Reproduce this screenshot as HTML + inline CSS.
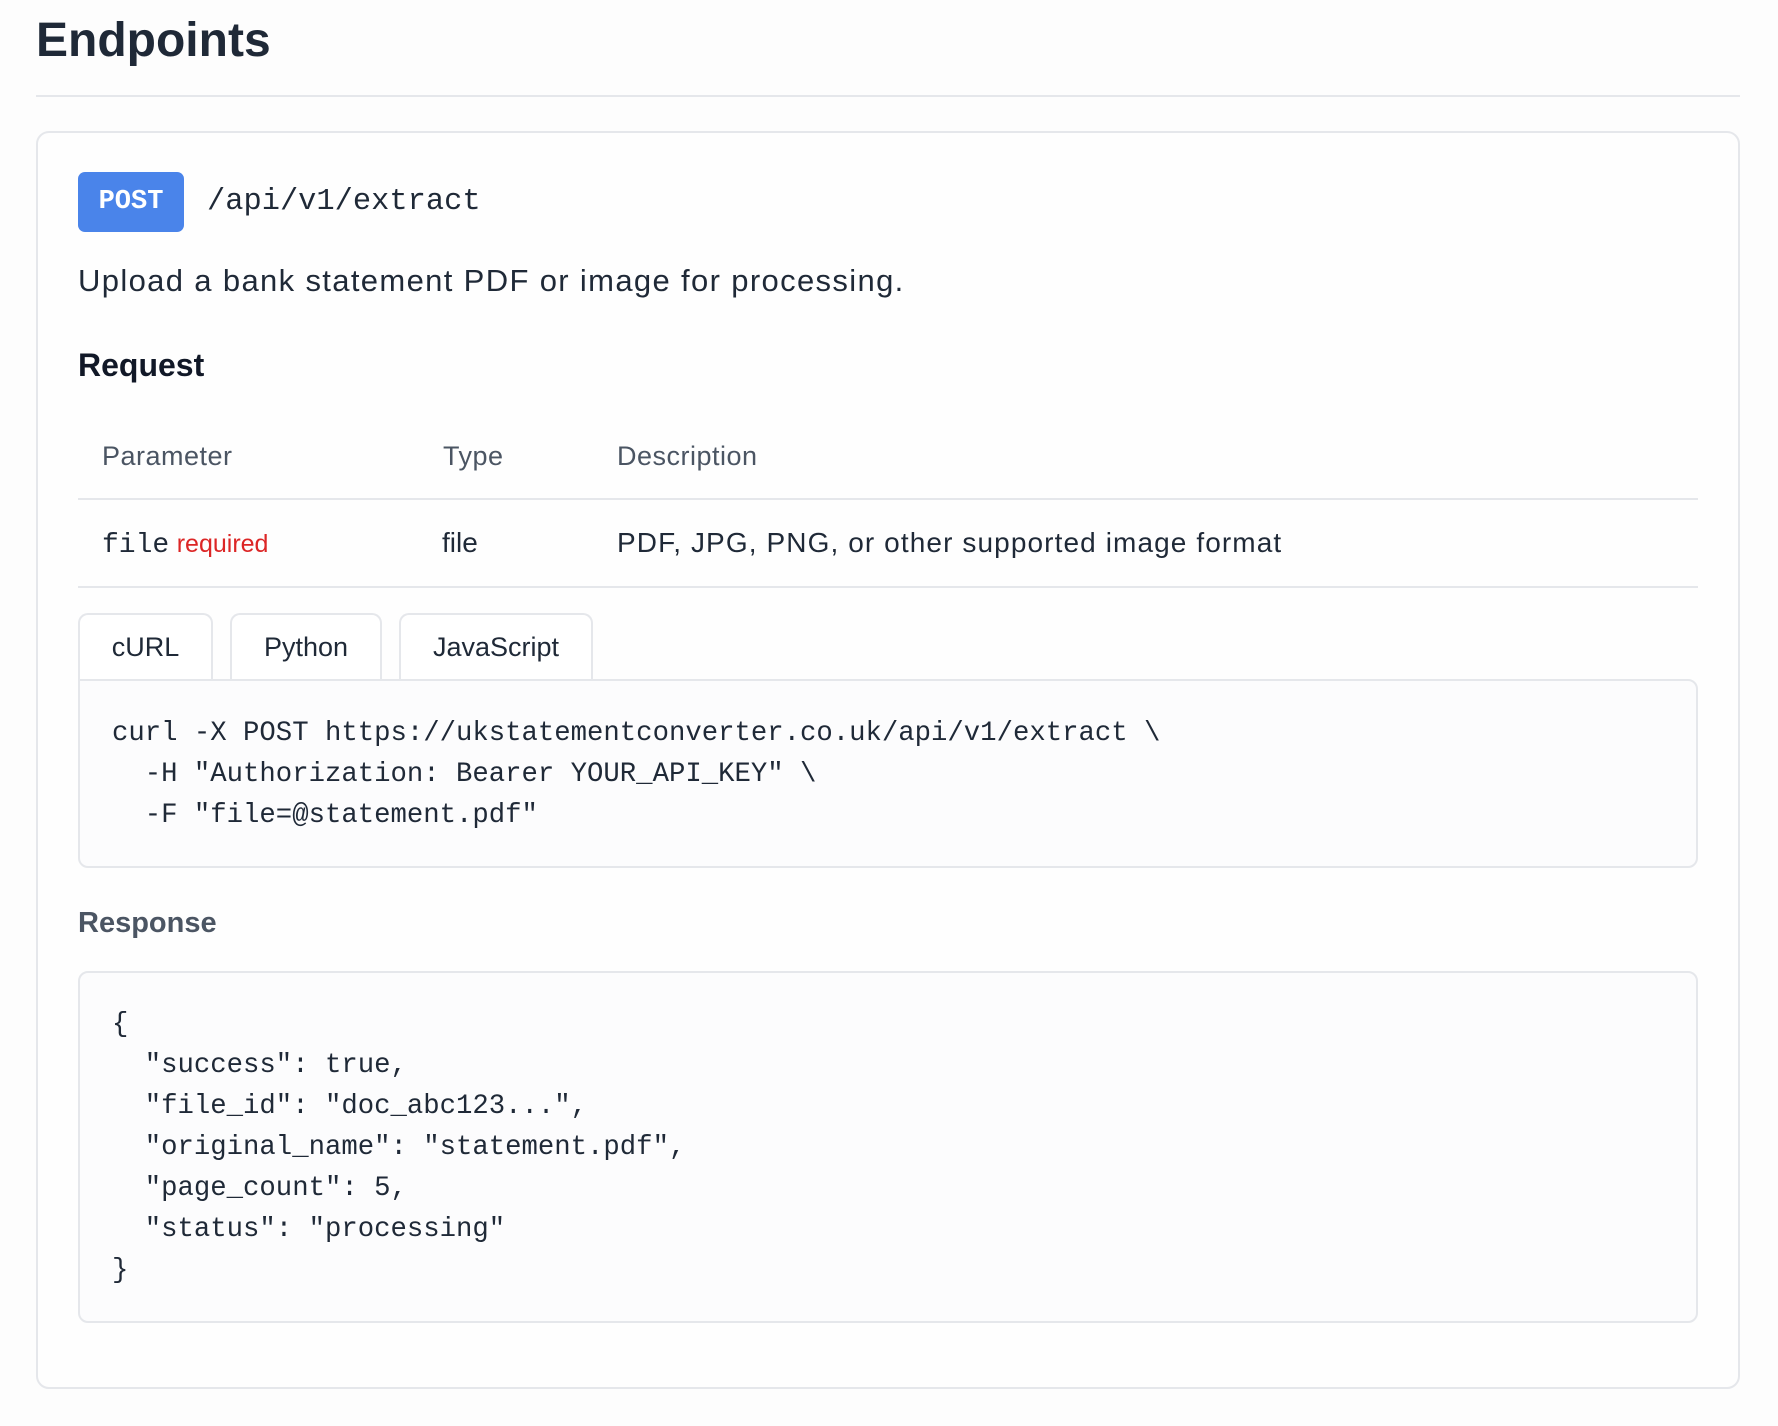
<!DOCTYPE html>
<html><head><meta charset="utf-8"><style>
*{box-sizing:border-box;margin:0;padding:0}
body{width:1778px;height:1426px;background:#fdfdfd;font-family:"Liberation Sans",sans-serif;color:#1f2937;position:relative;overflow:hidden}
.a{position:absolute;white-space:pre}
.mono{font-family:"Liberation Mono",monospace}
h1{position:absolute;left:36px;top:8px;font-size:48px;font-weight:700;color:#1f2937;line-height:66px}
.hr{position:absolute;left:36px;top:95px;width:1704px;height:2px;background:#e5e7eb}
.card{position:absolute;left:36px;top:131px;width:1704px;height:1258px;border:2px solid #e5e7eb;border-radius:13px;background:#fefefe}
.badge{position:absolute;left:78px;top:172px;width:106px;height:60px;background:#4a84ea;border-radius:7px;color:#fff;font-weight:700;font-size:27px;line-height:60px;text-align:center}
.line{position:absolute;left:78px;width:1620px;height:2px;background:#e5e7eb}
.tab{position:absolute;top:613px;height:68px;border:2px solid #e5e7eb;border-bottom:none;border-radius:10px 10px 0 0;background:#fff;font-size:27px;line-height:64px;text-align:center;color:#1f2937}
.box{position:absolute;left:78px;width:1620px;border:2px solid #e5e7eb;border-radius:10px;background:#fcfcfd}
.code{font-family:"Liberation Mono",monospace;font-size:27.3px;line-height:41px;color:#1f2937;position:absolute;left:112px;white-space:pre}
.th{font-size:27px;line-height:34px;color:#4b5563;letter-spacing:0.5px}
</style></head><body>
<h1>Endpoints</h1>
<div class="hr"></div>
<div class="card"></div>
<div class="badge mono">POST</div>
<div class="a mono" style="left:207px;top:182px;font-size:30.4px;line-height:40px;color:#1f2937">/api/v1/extract</div>
<div class="a" style="left:78px;top:263px;font-size:31px;letter-spacing:1.35px;line-height:36px">Upload a bank statement PDF or image for processing.</div>
<div class="a" style="left:78px;top:346px;font-size:32px;font-weight:700;line-height:38px;color:#111827">Request</div>
<div class="a th" style="left:102px;top:439px">Parameter</div>
<div class="a th" style="left:443px;top:439px">Type</div>
<div class="a th" style="left:617px;top:439px">Description</div>
<div class="line" style="top:498px"></div>
<div class="a" style="left:102px;top:526px;font-size:27px;line-height:34px"><span class="mono" style="font-size:28px">file</span> <span style="color:#dc2626;font-size:25px">required</span></div>
<div class="a" style="left:442px;top:526px;font-size:28px;line-height:34px">file</div>
<div class="a" style="left:617px;top:526px;font-size:28px;letter-spacing:1.1px;line-height:34px">PDF, JPG, PNG, or other supported image format</div>
<div class="line" style="top:586px"></div>
<div class="tab" style="left:78px;width:135px">cURL</div>
<div class="tab" style="left:230px;width:152px">Python</div>
<div class="tab" style="left:399px;width:194px">JavaScript</div>
<div class="box" style="top:679px;height:189px;border-radius:0 10px 10px 10px"></div>
<div class="code" style="top:713px">curl -X POST https://ukstatementconverter.co.uk/api/v1/extract \
  -H "Authorization: Bearer YOUR_API_KEY" \
  -F "file=@statement.pdf"</div>
<div class="a" style="left:78px;top:905px;font-size:29px;font-weight:700;line-height:36px;color:#4b5563">Response</div>
<div class="box" style="top:971px;height:352px"></div>
<div class="code" style="top:1004px">{
  "success": true,
  "file_id": "doc_abc123...",
  "original_name": "statement.pdf",
  "page_count": 5,
  "status": "processing"
}</div>
</body></html>
